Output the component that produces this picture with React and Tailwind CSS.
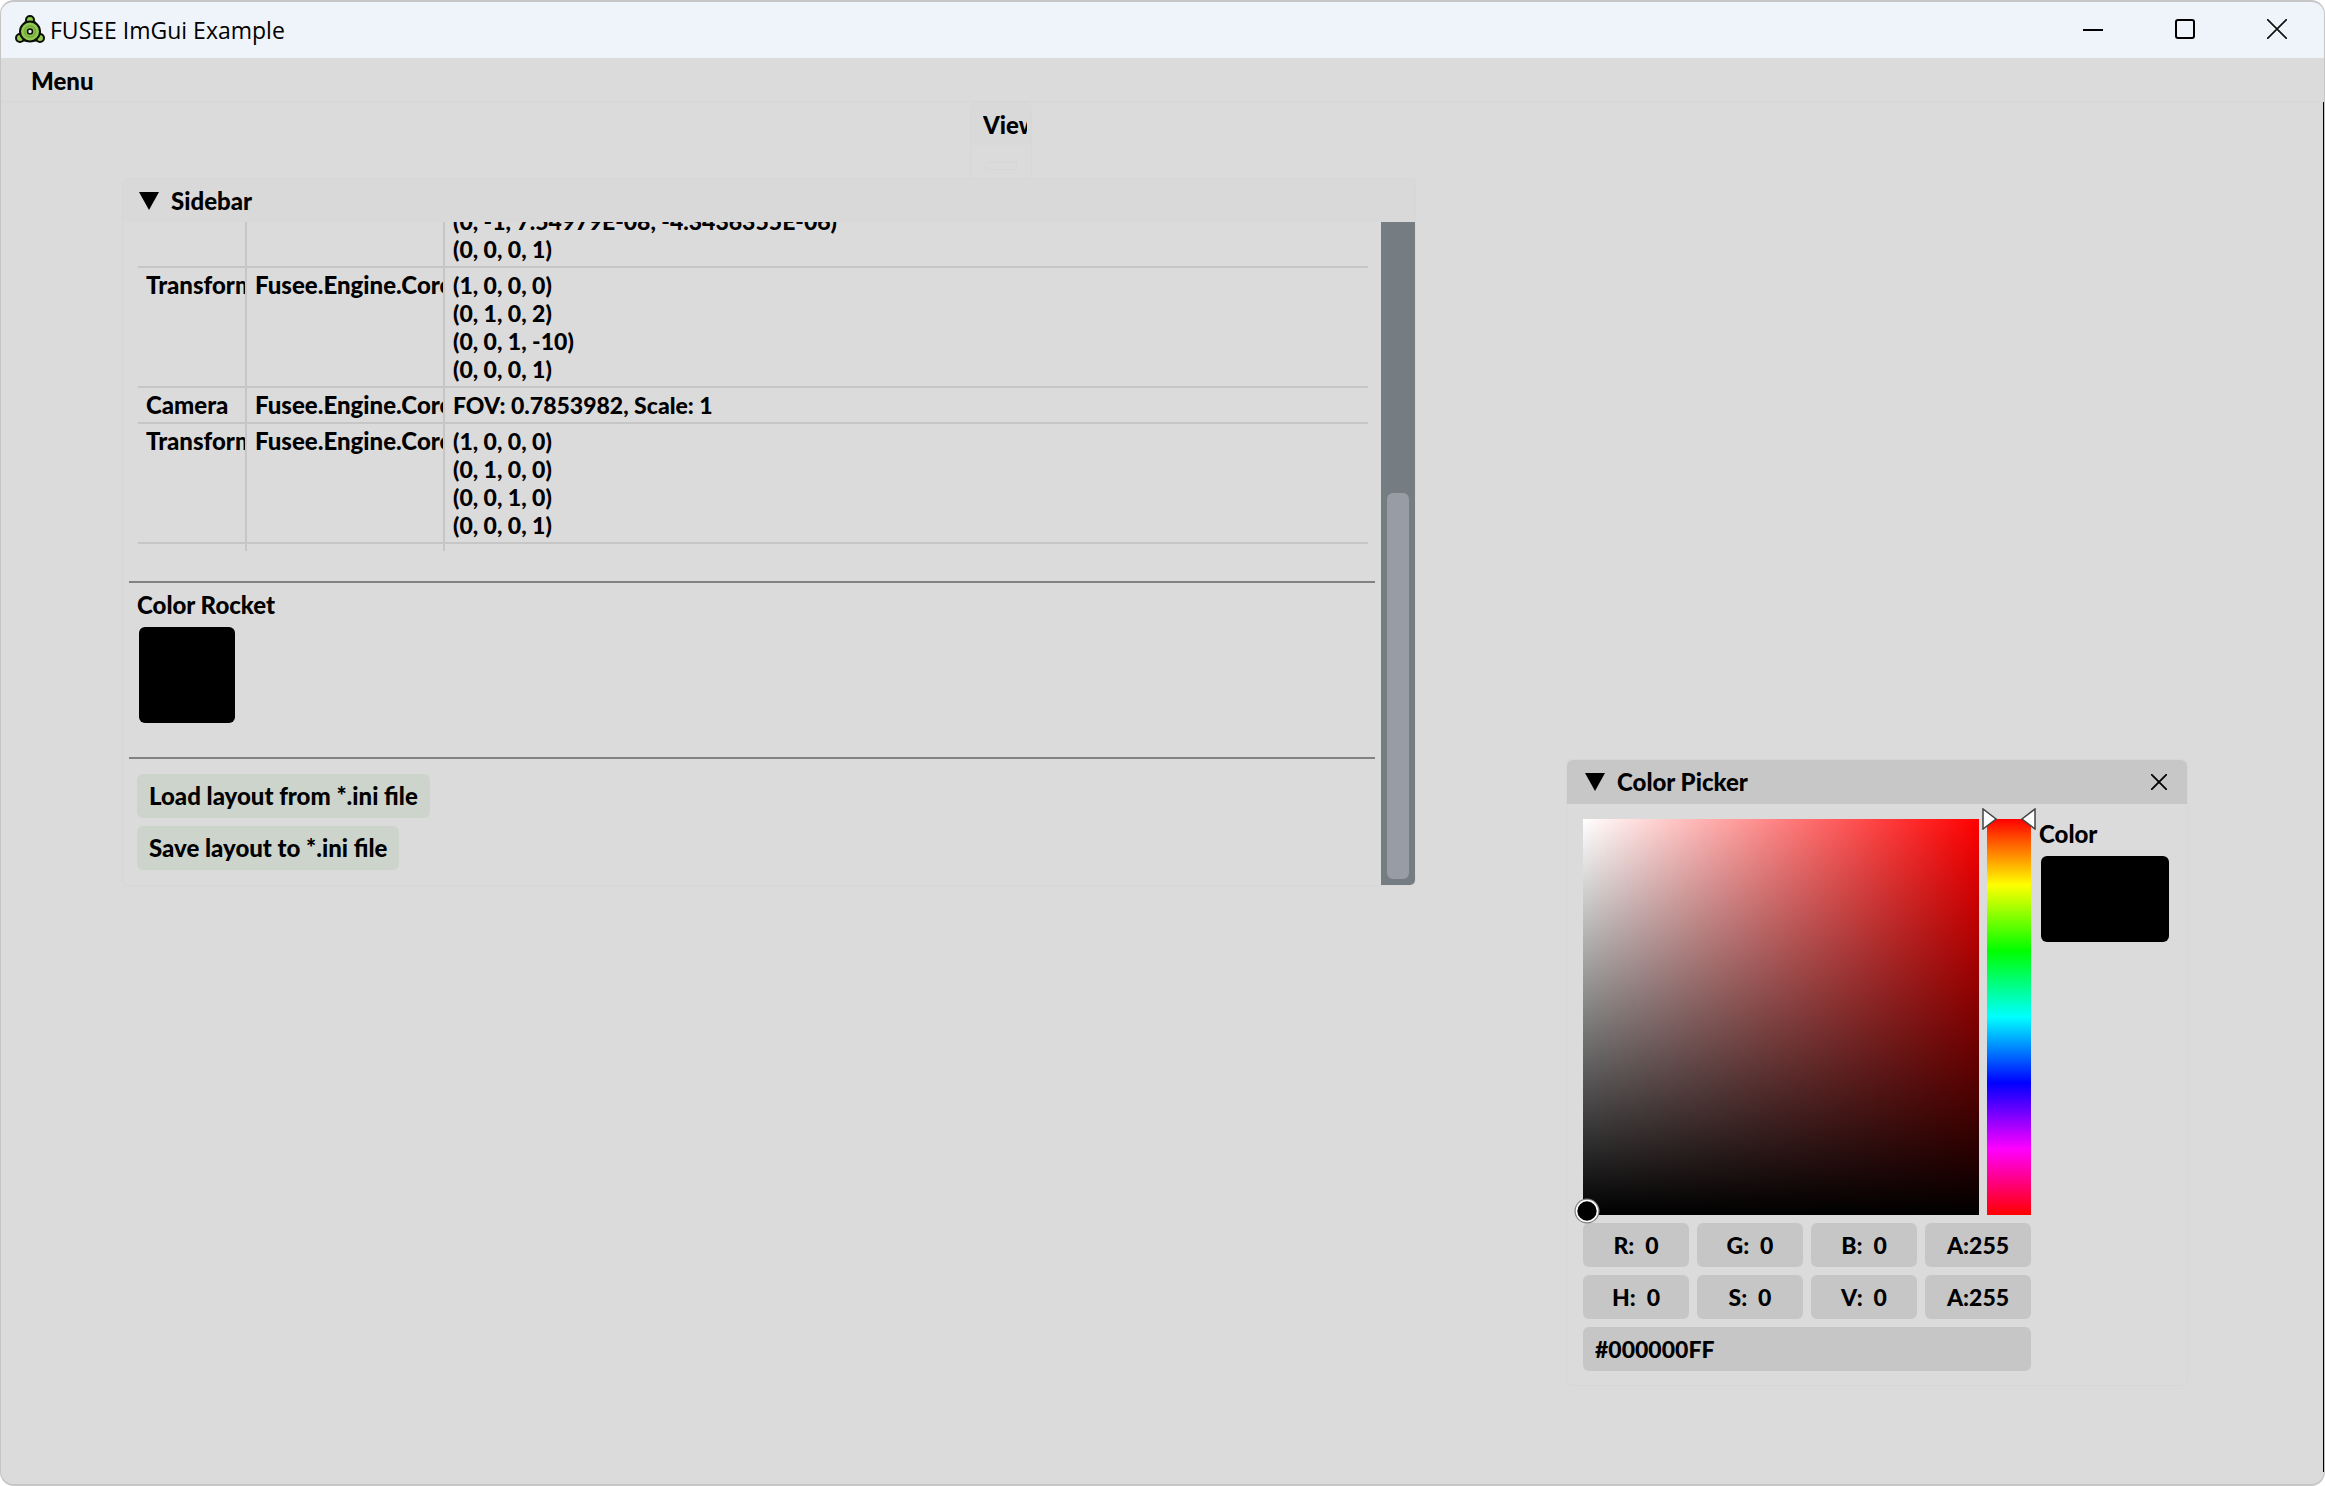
import React from "react";

const ROWS = [
  {
    name: "Transform",
    type: "Fusee.Engine.Core.Scene",
    lines: ["(1, 0, 0, 0)", "(0, 1, 0, 2)", "(0, 0, 1, -10)", "(0, 0, 0, 1)"],
  },
  {
    name: "Camera",
    type: "Fusee.Engine.Core.Scene",
    lines: ["FOV: 0.7853982, Scale: 1"],
  },
  {
    name: "Transform",
    type: "Fusee.Engine.Core.Scene",
    lines: ["(1, 0, 0, 0)", "(0, 1, 0, 0)", "(0, 0, 1, 0)", "(0, 0, 0, 1)"],
  },
];

const CHANNELS = [
  ["R:  0", "G:  0", "B:  0", "A:255"],
  ["H:  0", "S:  0", "V:  0", "A:255"],
];

function AppIcon() {
  return (
    <svg viewBox="0 0 30 28" className="h-7 w-[30px]" aria-hidden="true">
      <g stroke="#0b0f06" strokeWidth="2" fill="#92c951">
        <path d="M11 7 5 20M19 7l6 13M7 25h16" fill="none" strokeWidth="3" />
        <circle cx="15" cy="5" r="4" />
        <circle cx="5" cy="23" r="4" />
        <circle cx="25" cy="23" r="4" />
        <circle cx="15" cy="16.500" r="10" />
      </g>
      <circle cx="15" cy="16.500" r="5.500" fill="none" stroke="#78ac3c" strokeWidth="2" />
      <circle cx="15" cy="16.500" r="2.500" fill="#dfe8f5" stroke="#0b0f06" strokeWidth="1.600" />
    </svg>
  );
}

function Collapse({ label }) {
  return (
    <button type="button" aria-label={label} className="flex h-5 w-5 items-center">
      <svg viewBox="0 0 20 18" className="h-[18px] w-5" aria-hidden="true">
        <path d="M0 0h20L10 18z" fill="#000" />
      </svg>
    </button>
  );
}

function TitleBar() {
  return (
    <header className="flex h-14 items-center justify-between bg-[#eff3fa] pr-px pb-[2px] pl-[14px]">
      <div className="flex items-center gap-[5px]">
        <AppIcon />
        <h1 className="pt-[2px] font-['Open_Sans',sans-serif] text-[23px] leading-7 font-normal">FUSEE ImGui Example</h1>
      </div>
      <div className="flex h-full">
        <button type="button" aria-label="Minimize" className="flex w-[92px] items-center justify-center">
          <svg viewBox="0 0 20 20" className="size-5" aria-hidden="true">
            <path d="M0 11h20" stroke="#000" strokeWidth="2" />
          </svg>
        </button>
        <button type="button" aria-label="Maximize" className="flex w-[92px] items-center justify-center">
          <svg viewBox="0 0 20 20" className="size-5" aria-hidden="true">
            <rect x="1" y="1" width="18" height="18" rx="2" fill="none" stroke="#000" strokeWidth="2" />
          </svg>
        </button>
        <button type="button" aria-label="Close" className="flex w-[92px] items-center justify-center">
          <svg viewBox="0 0 20 20" className="size-5" aria-hidden="true">
            <path d="M0 0l20 20M20 0 0 20" stroke="#111" strokeWidth="1.700" />
          </svg>
        </button>
      </div>
    </header>
  );
}

function Viewport() {
  return (
    <section className="absolute top-0 left-[969px] h-20 w-[62px] rounded-t-md border border-[#d7d7d7]">
      <h2 className="h-[42px] overflow-hidden bg-[#d9d9d9] pt-1 pr-1 pl-3 leading-[36px]">
        <span className="block overflow-hidden whitespace-nowrap">Viewport</span>
      </h2>
      <div className="mt-[17px] ml-[14px] h-2 w-8 border border-[#d7d7d7]" />
    </section>
  );
}

function SceneTable() {
  return (
    <table className="w-full table-fixed border-collapse">
      <colgroup>
        <col className="w-[108px]" />
        <col className="w-[198px]" />
        <col />
      </colgroup>
      <tbody className="align-top">
        <tr className="border-b-2 border-[#c6c6c6]">
          <td className="border-r-2 border-[#c6c6c6]" />
          <td className="border-r-2 border-[#c6c6c6]" />
          <td className="px-2 py-[3px] text-[23px] leading-7">
            <div>(0, -1, 7.54979E-08, -4.3436355E-06)</div>
            <div>(0, 0, 0, 1)</div>
          </td>
        </tr>
        {ROWS.map((row, i) => (
          <tr key={i} className="border-b-2 border-[#c6c6c6]">
            <td className="overflow-hidden border-r-2 border-[#c6c6c6] py-[3px] pl-2 whitespace-nowrap">{row.name}</td>
            <td className="overflow-hidden border-r-2 border-[#c6c6c6] py-[3px] pl-2 whitespace-nowrap">{row.type}</td>
            <td className="px-2 py-[3px] text-[23px] leading-7">
              {row.lines.map((line) => (
                <div key={line}>{line}</div>
              ))}
            </td>
          </tr>
        ))}
        <tr className="h-2">
          <td className="border-r-2 border-[#c6c6c6]" />
          <td className="border-r-2 border-[#c6c6c6]" />
          <td />
        </tr>
      </tbody>
    </table>
  );
}

function Sidebar() {
  return (
    <section className="absolute top-[76px] left-[121px] w-[1294px] overflow-hidden rounded-md border border-[#d7d7d7] bg-[#dbdbdb]">
      <div className="flex h-[43px] items-center gap-3 bg-[#d9d9d9] pl-4">
        <Collapse label="Collapse sidebar" />
        <h2>Sidebar</h2>
      </div>
      <div className="flex h-[663px]">
        <div className="flex min-w-0 flex-1 flex-col justify-end overflow-hidden pr-[6px] pl-[6px]">
          <div className="pr-[7px] pl-[9px]">
            <SceneTable />
          </div>
          <hr className="mt-[30px] border-t-2 border-[#828282]" />
          <div className="pt-2 pl-2">
            <h3>Color Rocket</h3>
            <button type="button" aria-label="Rocket color" className="mt-2 ml-[2px] block size-24 rounded-md bg-black" />
          </div>
          <hr className="mt-[34px] border-t-2 border-[#828282]" />
          <div className="flex flex-col items-start gap-2 pt-[15px] pb-[15px] pl-2">
            <button type="button" className="h-11 rounded-md bg-[#ccd4cb] px-3">Load layout from *.ini file</button>
            <button type="button" className="h-11 rounded-md bg-[#ccd4cb] px-3">Save layout to *.ini file</button>
          </div>
        </div>
        <div className="flex w-[34px] flex-col justify-end bg-[#757d83] p-[6px]">
          <div className="h-[386px] rounded-md bg-[#979ca5]" />
        </div>
      </div>
    </section>
  );
}

function ColorPicker() {
  return (
    <section className="absolute top-[657px] left-[1565px] w-[622px] rounded-md border border-[#d7d7d7]">
      <div className="flex h-11 items-center rounded-t-md bg-[#c7c7c7] pr-[20px] pl-[18px]">
        <Collapse label="Collapse color picker" />
        <h2 className="ml-3 flex-1">Color Picker</h2>
        <button type="button" aria-label="Close color picker" className="flex size-4">
          <svg viewBox="0 0 16 16" className="size-4" aria-hidden="true">
            <path d="M0 0l16 16M16 0 0 16" stroke="#000" strokeWidth="1.800" />
          </svg>
        </button>
      </div>
      <div className="flex gap-2 pt-[15px] pr-[18px] pb-[14px] pl-4">
        <div className="flex w-[448px] flex-col gap-2">
          <div className="flex gap-2">
            <div className="relative size-[396px] bg-[#f00] bg-[linear-gradient(to_top,#000,transparent),linear-gradient(to_right,#fff,transparent)]">
              <svg viewBox="0 0 26 26" className="absolute -bottom-[9px] -left-[9px] size-[26px]" aria-hidden="true">
                <circle cx="13" cy="13" r="11.500" fill="#000" stroke="#808080" strokeWidth="2" />
                <circle cx="13" cy="13" r="10.500" fill="#000" stroke="#fff" strokeWidth="1.600" />
              </svg>
            </div>
            <div className="relative w-11 bg-[linear-gradient(to_bottom,#f00,#ff0,#0f0,#0ff,#00f,#f0f,#f00)]">
              <svg viewBox="0 0 54 22" className="absolute -top-[11px] -left-[5px] h-[22px] w-[54px]" aria-hidden="true">
                <path d="M1 1v20L14 11zM53 1v20L40 11z" fill="#fff" stroke="#444" strokeWidth="1.500" />
              </svg>
            </div>
          </div>
          {CHANNELS.map((row) => (
            <div key={row[0]} className="flex gap-2">
              {row.map((value) => (
                <input
                  key={value}
                  aria-label={value.slice(0, 1)}
                  defaultValue={value}
                  className="h-11 min-w-0 flex-1 rounded-md bg-[#c6c6c6] text-center text-[23px] whitespace-pre"
                />
              ))}
            </div>
          ))}
          <input aria-label="Hex color" defaultValue="#000000FF" className="h-11 rounded-md bg-[#c6c6c6] px-3 text-[23px]" />
        </div>
        <div className="flex-1">
          <h3 className="pt-px">Color</h3>
          <button type="button" aria-label="Current color" className="mt-2 ml-[2px] block h-[86px] w-32 rounded-md bg-black" />
        </div>
      </div>
    </section>
  );
}

export default function App() {
  return (
    <div className="flex h-screen flex-col overflow-hidden rounded-[14px] border border-t-2 border-b-2 border-[#c6c6c6] bg-[#dbdbdb] font-['Lato',sans-serif] text-[24px] leading-7 font-black text-black">
      <TitleBar />
      <nav className="flex h-11 items-center border-b border-[#d7d7d7] pt-[2px] pl-[30px]">
        <button type="button">Menu</button>
      </nav>
      <main className="relative mb-3 flex-1 border-r border-black">
        <Viewport />
        <Sidebar />
        <ColorPicker />
      </main>
    </div>
  );
}
